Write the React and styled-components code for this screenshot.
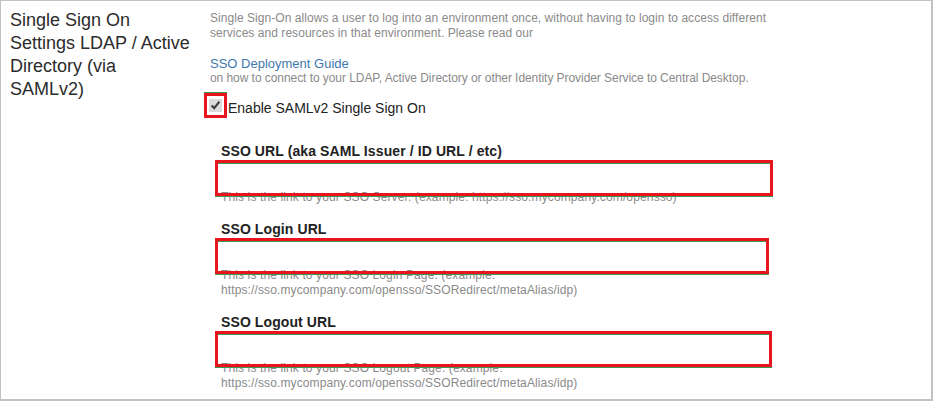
import React from "react"
import styled, { createGlobalStyle } from 'styled-components'

const GlobalStyle = createGlobalStyle`
  body {
    margin: 0;
    background: #fff;
    font-family: "Liberation Sans", Arial, sans-serif;
  }
`;

const Frame = styled.div`
  box-sizing: border-box;
  width: 933px;
  height: 401px;
  border: 1px solid #c2c2c2;
  border-right-width: 2px;
  border-bottom-width: 2px;
  display: grid;
  grid-template-columns: 209px 1fr;
  overflow: hidden;
`;

const Heading = styled.h2`
  margin: 0;
  padding: 8px 0 0 9px;
  font-size: 18px;
  line-height: 23px;
  font-weight: normal;
  color: #2b2b2b;
`;

const Main = styled.div`
  padding-top: 10px;
`;

const Desc = styled.p`
  margin: 0;
  width: 600px;
  font-size: 12px;
  line-height: 15px;
  letter-spacing: ${p => p.$spacing || 0}px;
  color: #8a8a8a;
`;

const Guide = styled.a`
  display: block;
  margin-top: 15px;
  font-size: 13px;
  line-height: 15px;
  color: #3f78ad;
  text-decoration: none;
`;

const CheckRow = styled.label`
  display: flex;
  align-items: center;
  margin-top: 7px;
  margin-left: -6px;
  font-size: 14px;
  color: #222;
`;

const CheckMark = styled.span`
  box-sizing: border-box;
  width: 23px;
  height: 25px;
  display: flex;
  align-items: center;
  justify-content: center;
  border: 3px solid #e8151f;
  box-shadow: 0 -1px 0 #3c9a55;

  input {
    margin: 0;
    width: 13px;
    height: 13px;
    accent-color: #dcdcdc;
  }
`;

const CheckText = styled.span`
  padding-top: 5px;
  margin-left: 1px;
`;

const Fields = styled.div`
  margin-top: 25px;
  padding-left: 11px;
  display: flex;
  flex-direction: column;
  gap: 16px;
`;

const Field = styled.div`
  display: flex;
  flex-direction: column;
`;

const Label = styled.label`
  margin-bottom: 1px;
  font-size: 14px;
  line-height: 16px;
  letter-spacing: 0.1px;
  font-weight: bold;
  color: #222;
`;

const Box = styled.div`
  position: relative;
  z-index: 1;
  box-sizing: border-box;
  margin-left: -6px;
  width: ${p => p.$w}px;
  height: 36px;
  border: 3px solid #e8151f;
  box-shadow: 0 1px 0 #3c9a55, inset 0 1px 0 #3c9a55;

  input {
    box-sizing: border-box;
    width: 100%;
    height: 100%;
    border: none;
    outline: none;
    background: transparent;
  }
`;

const Help = styled.div`
  margin-top: -6px;
  font-size: 12px;
  line-height: 15px;
  letter-spacing: 0.12px;
  color: #8a8a8a;
`;

const fields = [
  {
    label: "SSO URL (aka SAML Issuer / ID URL / etc)",
    width: 558,
    help: ["This is the link to your SSO Server. (example: https://sso.mycompany.com/opensso)"],
  },
  {
    label: "SSO Login URL",
    width: 554,
    help: ["This is the link to your SSO Login Page. (example:", "https://sso.mycompany.com/opensso/SSORedirect/metaAlias/idp)"],
  },
  {
    label: "SSO Logout URL",
    width: 557,
    help: ["This is the link to your SSO Logout Page. (example:", "https://sso.mycompany.com/opensso/SSORedirect/metaAlias/idp)"],
  },
];

const App = () => {
  return (
    <>
      <GlobalStyle />
      <Frame>
        <Heading>
          Single Sign On<br />
          Settings LDAP / Active<br />
          Directory (via<br />
          SAMLv2)
        </Heading>
        <Main>
          <Desc $spacing={0.05}>
            Single Sign-On allows a user to log into an environment once, without having to login to access different<br />
            services and resources in that environment. Please read our
          </Desc>
          <Guide href="#">SSO Deployment Guide</Guide>
          <Desc $spacing={-0.06}>
            on how to connect to your LDAP, Active Directory or other Identity Provider Service to Central Desktop.
          </Desc>
          <CheckRow>
            <CheckMark>
              <input type="checkbox" defaultChecked />
            </CheckMark>
            <CheckText>Enable SAMLv2 Single Sign On</CheckText>
          </CheckRow>
          <Fields>
            {fields.map(f => (
              <Field key={f.label}>
                <Label>{f.label}</Label>
                <Box $w={f.width}>
                  <input type="text" />
                </Box>
                <Help>
                  {f.help.map(line => <div key={line}>{line}</div>)}
                </Help>
              </Field>
            ))}
          </Fields>
        </Main>
      </Frame>
    </>
  );
};

export default App;
